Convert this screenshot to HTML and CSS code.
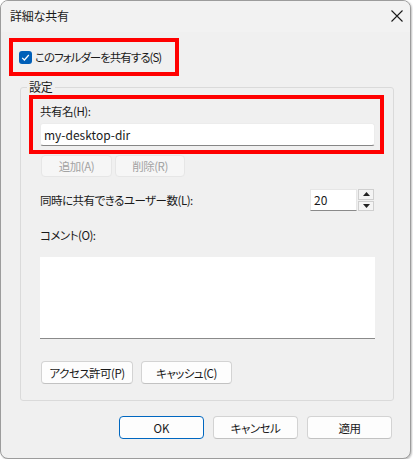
FILE: index.html
```html
<!DOCTYPE html>
<html lang="ja">
<head>
<meta charset="utf-8">
<title>詳細な共有</title>
<link rel="stylesheet" href="styles.css">
</head>
<body>
<div class="window">
  <div class="titlebar">
    <span class="title">詳細な共有</span>
    <svg class="close" width="12" height="12" viewBox="0 0 12 12"><path d="M0.5 0.5 L11.5 11.5 M11.5 0.5 L0.5 11.5" stroke="#1a1a1a" stroke-width="1.1" fill="none"/></svg>
  </div>
  <div class="share-box">
    <span class="checkbox"><svg width="9" height="9" viewBox="0 0 9 9"><path d="M1.2 4.8 L3.4 7 L7.8 2" stroke="#fff" stroke-width="1.2" fill="none"/></svg></span>
    <span class="label tight">このフォルダーを共有する(S)</span>
  </div>
  <fieldset class="group">
    <legend>設定</legend>
    <div class="name-box">
      <div class="label line">共有名(H):</div>
      <div class="textinput">my-desktop-dir</div>
    </div>
    <div class="btnrow small">
      <span class="btn disabled w71">追加(A)</span>
      <span class="btn disabled w70">削除(R)</span>
    </div>
    <div class="users-row">
      <span class="label">同時に共有できるユーザー数(L):</span>
      <div class="spin">
        <div class="spin-input">20</div>
        <div class="spin-btns">
          <span class="spin-btn"><svg width="7" height="4" viewBox="0 0 7 4"><path d="M0 4 L3.5 0 L7 4 Z" fill="#222"/></svg></span>
          <span class="spin-btn"><svg width="7" height="4" viewBox="0 0 7 4"><path d="M0 0 L3.5 4 L7 0 Z" fill="#222"/></svg></span>
        </div>
      </div>
    </div>
    <div class="label line comment-label">コメント(O):</div>
    <div class="textarea"></div>
    <div class="btnrow perms">
      <span class="btn w92">アクセス許可(P)</span>
      <span class="btn w91">キャッシュ(C)</span>
    </div>
  </fieldset>
  <div class="footer">
    <span class="btn primary">OK</span>
    <span class="btn">キャンセル</span>
    <span class="btn">適用</span>
  </div>
</div>
</body>
</html>
```
FILE: styles.css
```css
* { box-sizing: border-box; }
html, body {
  margin: 0;
  padding: 0;
  background: #ffffff;
}
body {
  font-family: "Noto Sans CJK JP", "Noto Sans", sans-serif;
  font-size: 11.5px;
  letter-spacing: -0.5px;
  font-feature-settings: "palt";
  color: #1a1a1a;
}
.window {
  width: 411px;
  height: 459px;
  border: 1px solid #9c9c9c;
  border-radius: 8px;
  background: #f0f0f0;
  overflow: hidden;
  display: flex;
  flex-direction: column;
  box-shadow: 1px 1px 2px rgba(0,0,0,0.25);
}
.titlebar {
  height: 31px;
  flex: none;
  display: flex;
  align-items: center;
  justify-content: space-between;
  padding: 0 7px 1px 9px;
  background: #f2f2f2;
}
.title { line-height: 16px; font-size: 12px; letter-spacing: -0.2px; }
.close { display: block; }
.share-box {
  margin: 6px 0 0 8px;
  width: 170px;
  height: 38px;
  border: 4px solid #ff0000;
  display: flex;
  align-items: center;
  padding-left: 6px;
  gap: 3px;
  flex: none;
}
.checkbox {
  width: 13px;
  height: 13px;
  border-radius: 3px;
  background: #005fb8;
  display: flex;
  align-items: center;
  justify-content: center;
  flex: none;
}
.checkbox svg { display: block; }
.label { line-height: 16px; white-space: nowrap; }
.label.tight { letter-spacing: -1px; }
.line { display: block; }
.group {
  margin: 3px 0 0 19px;
  width: 374px;
  padding: 0 0 16px 0;
  border: 1px solid #dadada;
  border-radius: 3px;
  min-width: 0;
  flex: none;
}
.group legend {
  margin-left: 6px;
  padding: 0 2px;
  line-height: 16px;
  font-size: 12px;
  letter-spacing: -0.2px;
}
.name-box {
  margin-left: 8px;
  width: 355px;
  border: 4px solid #ff0000;
  padding: 4px 5px 4px 7px;
}
.textinput {
  margin-top: 4px;
  height: 23px;
  background: #ffffff;
  border: 1px solid #ececec;
  border-bottom: 1px solid #868686;
  border-radius: 3px;
  padding-left: 3px;
  line-height: 21px;
  font-size: 12px;
  letter-spacing: 0;
}
.btnrow {
  display: flex;
}
.btnrow.small {
  margin: 1px 0 0 20px;
  gap: 3px;
}
.btn {
  height: 23px;
  display: flex;
  align-items: center;
  justify-content: center;
  background: #fdfdfd;
  border: 1px solid #d3d3d3;
  border-bottom-color: #c2c2c2;
  border-radius: 4px;
  line-height: 16px;
  white-space: nowrap;
}
.btn.disabled {
  background: #f6f6f6;
  border-color: #e6e6e6;
  color: #a3a3a3;
  height: 22px;
}
.w71 { width: 71px; }
.w70 { width: 70px; }
.w92 { width: 92px; }
.w91 { width: 91px; }
.users-row {
  margin: 12px 0 0 19px;
  width: 334px;
  display: flex;
  align-items: center;
  justify-content: space-between;
}
.spin {
  display: flex;
  gap: 1px;
}
.spin-input {
  width: 47px;
  height: 22px;
  background: #ffffff;
  border: 1px solid #e6e6e6;
  border-bottom-color: #8a8a8a;
  padding-left: 3px;
  line-height: 20px;
  font-size: 12px;
  letter-spacing: 0;
}
.spin-btns {
  display: flex;
  flex-direction: column;
  gap: 1px;
}
.spin-btn {
  width: 16px;
  height: 10.5px;
  border: 1px solid #cfcfcf;
  background: #f4f4f4;
  display: flex;
  align-items: center;
  justify-content: center;
}
.spin-btn svg { display: block; }
.comment-label {
  margin: 16px 0 0 19px;
}
.textarea {
  margin: 14px 0 0 19px;
  width: 335px;
  height: 82px;
  background: #ffffff;
  border-bottom: 1px solid #8a8a8a;
}
.btnrow.perms {
  margin: 22px 0 0 20px;
  gap: 8px;
}
.footer {
  margin-top: 15px;
  display: flex;
  justify-content: flex-end;
  gap: 9px;
  padding-right: 18px;
}
.footer .btn { width: 85px; }
.footer .btn.primary {
  border: 1.5px solid #0067c0;
  letter-spacing: 0;
}
```
